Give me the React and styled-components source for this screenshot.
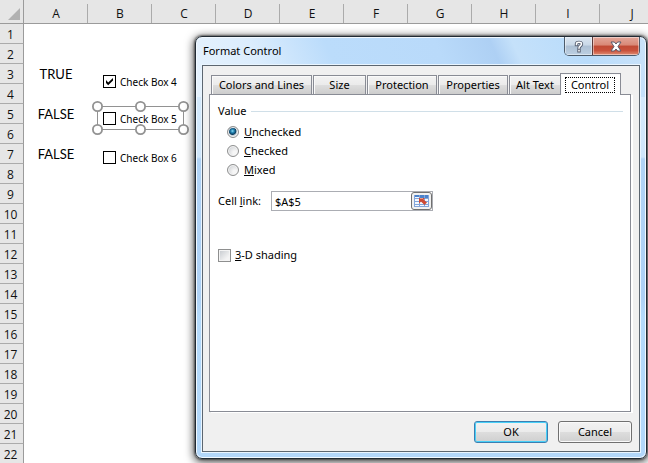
import React, { useState } from "react";
import styled, { createGlobalStyle, css } from "styled-components";

const GlobalStyle = createGlobalStyle`
  *, *::before, *::after { box-sizing: border-box; }
  body {
    margin: 0;
    overflow: hidden;
    background: #fff;
    color: #000;
    font-family: "Noto Sans", "Open Sans", sans-serif;
    font-size: 11px;
    line-height: 16px;
  }
  button, input { font: inherit; color: inherit; }
`;

const Workspace = styled.main`
  position: relative;
  min-height: 100vh;
  overflow: hidden;
`;

/* ---------- worksheet ---------- */

const Sheet = styled.table`
  width: 664px;
  table-layout: fixed;
  border-collapse: separate;
  border-spacing: 0;
`;

const IndexCol = styled.col`
  width: 24px;
`;

const headerCell = css`
  padding: 0;
  background: #e6e6e6;
  color: #111;
  font-family: "Open Sans", "Noto Sans", sans-serif;
  font-size: 12px;
  line-height: 16px;
  font-weight: 400;
`;

const ColumnHead = styled.th`
  ${headerCell}
  height: 24px;
  padding-top: 4px;
  border-bottom: 1px solid #9b9b9b;
  background: linear-gradient(#ababab, #ababab) right bottom / 1px 19px no-repeat #e6e6e6;
`;

const Corner = styled.td`
  height: 24px;
  padding: 0;
  background: #e6e6e6;
  border-bottom: 1px solid #9b9b9b;
  border-right: 1px solid #9b9b9b;

  svg { display: block; margin: 4px 0 0 8px; }
`;

const RowHead = styled.th`
  ${headerCell}
  height: 20px;
  padding: 2px 2px 0 0;
  border-right: 1px solid #9b9b9b;
  border-bottom: 1px solid #ababab;
`;

const Cell = styled.td`
  height: 20px;
  padding: 0;
  text-align: center;
  font-family: Lato, sans-serif;
  font-size: 13px;
  line-height: 18px;
`;

/* ---------- controls floating over the worksheet ---------- */

const SheetControl = styled.label`
  position: absolute;
  left: 103px;
  top: ${(p) => p.$top}px;
  display: flex;
  align-items: center;
  gap: 4px;
  height: 13px;
  font-size: 10px;
  white-space: nowrap;
`;

const TickHolder = styled.span`
  display: grid;
  width: 13px;
  height: 13px;

  > * { grid-area: 1 / 1; }
  > svg { pointer-events: none; visibility: hidden; }
  > input:checked + svg { visibility: visible; }
`;

const TickInput = styled.input`
  appearance: none;
  width: 13px;
  height: 13px;
  margin: 0;
  border: 1px solid ${(p) => (p.$soft ? "#8e8f8f" : "#000")};
  background: ${(p) =>
    p.$soft ? "linear-gradient(135deg, #c4c8cd, #f4f4f4 75%) padding-box" : "#fff"};
  ${(p) => p.$soft && "box-shadow: inset 0 0 0 1px #f4f4f4;"}
`;

const Selection = styled.svg`
  position: absolute;
  left: 91px;
  top: 100px;
  pointer-events: none;
`;

/* ---------- dialog ---------- */

const Dialog = styled.section`
  position: absolute;
  left: 195px;
  right: 1px;
  top: 36px;
  padding: 0 6px 6px;
  border: 1px solid #202a33;
  border-radius: 7px;
  background:
    linear-gradient(65deg, #e6f2fd 0, #dcedfd 70px, #bbdcfb 140px, #b9dafa 240px, #aed0f4 290px, #c5e1fa 310px, #b9dcfb 370px, #cbe3f9 100%) top / 100% 60px no-repeat,
    linear-gradient(#d9edfd 0, #cfe6fb 120px, #b0d3f6 122px, #aed1f5 260px, #b4dafb 280px, #b2d7fa 100%);
  box-shadow:
    inset 0 0 0 1px #f2f9ff,
    0 0 2px 1px rgba(0, 0, 0, 0.45),
    0 2px 9px 2px rgba(0, 0, 0, 0.6);
`;

const TitleBar = styled.header`
  display: flex;
  justify-content: space-between;
  height: 28px;
`;

const Title = styled.h1`
  margin: 0;
  padding: 6px 0 0 1px;
  font-size: 11px;
  line-height: 16px;
  font-weight: 400;
`;

const CaptionButtons = styled.div`
  display: flex;
  align-self: flex-start;
  height: 19px;
  border: 1px solid #4c5b6b;
  border-top: 0;
  border-radius: 0 0 5px 5px;
  overflow: hidden;
`;

const CaptionButton = styled.button`
  display: grid;
  place-items: center;
  width: ${(p) => (p.$close ? 47 : 27)}px;
  padding: 0;
  border: 0;
  ${(p) => p.$close && "border-left: 1px solid #5d3a3a;"}
  background: ${(p) =>
    p.$close
      ? "linear-gradient(#e3a79a 0, #d98876 45%, #c04a35 50%, #c9523c 75%, #e08d74 100%)"
      : "linear-gradient(#dbe6f1 0, #c9d8e7 45%, #adc0d4 50%, #bccfe2 100%)"};
  box-shadow: inset 0 0 0 1px rgba(255, 255, 255, 0.45);
`;

const Client = styled.form`
  display: flex;
  flex-direction: column;
  padding: 7px 6px 8px;
  border: 1px solid #5c6670;
  background: #f0f0f0;
  box-shadow: 0 0 0 1px #e9f5ff;
`;

const TabList = styled.div`
  display: flex;
  align-items: flex-end;
  height: 22px;
  padding-left: 2px;
`;

const Tab = styled.button`
  position: relative;
  flex: none;
  width: ${(p) => p.$width}px;
  height: 20px;
  padding: 0;
  border: 1px solid #898c95;
  background: linear-gradient(#f3f3f3 0, #ebebeb 50%, #dddddd 52%, #cdcdcd 100%);
  box-shadow: inset 1px 1px 0 #fafafa;
  line-height: 18px;
  white-space: nowrap;
  z-index: 0;

  & + & { margin-left: 1px; }

  &[aria-selected="true"] {
    z-index: 1;
    height: 22px;
    margin-left: -1px;
    padding: 3px 5px 2px 4px;
    border-bottom: 0;
    background: #fff;
    line-height: 14px;
  }
`;

const FocusFrame = styled.span`
  display: block;
  height: 16px;
  border: 1px dotted #000;
  line-height: 14px;
`;

const Panel = styled.div`
  display: flex;
  flex-direction: column;
  min-height: 318px;
  margin: -1px 2px 0 0;
  padding: 8px 7px 0 8px;
  border: 1px solid #898c95;
  background: #fff;
  box-shadow: 2px 1px 0 #fff;
`;

const ValueGroup = styled.fieldset`
  display: flex;
  flex-direction: column;
  gap: 3px;
  min-width: 0;
  margin: 0;
  padding: 0;
  border: 0;
`;

const Legend = styled.legend`
  display: flex;
  align-items: center;
  gap: 5px;
  width: 100%;
  margin-bottom: 5px;
  padding: 0;

  &::after {
    content: "";
    flex: 1;
    height: 1px;
    background: #d0dfe8;
  }
`;

const Choice = styled.label`
  display: flex;
  align-items: center;
  gap: ${(p) => (p.$indent ? 5 : 4)}px;
  height: 16px;
  padding-left: ${(p) => (p.$indent ? 9 : 0)}px;
`;

const Radio = styled.input`
  appearance: none;
  width: 12px;
  height: 12px;
  margin: 0;
  border: 1px solid #8e8f8f;
  border-radius: 50%;
  background: radial-gradient(circle at 70% 70%, #f6f6f6 20%, #c9ccd0 90%);
  box-shadow: inset 0 0 0 1px #f4f4f4;

  &:checked {
    background: radial-gradient(circle at 45% 40%, #8fdcf5 0, #2587b5 20%, #0d3d5f 43%, #b9c6cf 52%, #e4e8eb 70%);
  }
`;

const LinkRow = styled.div`
  display: flex;
  align-items: center;
  gap: 10px;
  margin-top: 13px;
`;

const LinkLabel = styled.label`
  width: 43px;
  white-space: nowrap;
`;

const RefBox = styled.div`
  display: flex;
  width: 162px;
  height: 20px;
  border: 1px solid #abadb3;
`;

const RefInput = styled.input`
  flex: 1;
  min-width: 0;
  padding: 2px 0 0 3px;
  border: 0;
  outline: 0;
  background: transparent;
`;

const RefButton = styled.button`
  display: grid;
  place-items: center;
  width: 21px;
  padding: 0;
  border: 1px solid #707070;
  border-radius: 3px;
  background: #f1f1f1;
`;

const ShadingRow = styled.div`
  margin-top: 36px;
`;

const Actions = styled.footer`
  display: flex;
  justify-content: flex-end;
  gap: 10px;
  margin-top: 9px;
  padding-right: 1px;
`;

const ActionButton = styled.button`
  width: 74px;
  height: 22px;
  padding: 0;
  border: 1px solid ${(p) => (p.$primary ? "#3c7fb1" : "#707070")};
  border-radius: 3px;
  background: linear-gradient(#f2f2f2 0, #ebebeb 50%, #dddddd 52%, #cfcfcf 100%);
  box-shadow: inset 0 0 0 1px ${(p) => (p.$primary ? "#48d0f8" : "#fafafa")};
`;

const columns = ["A", "B", "C", "D", "E", "F", "G", "H", "I", "J"];
const rows = Array.from({ length: 22 }, (_, i) => i + 1);
const values = { 3: "TRUE", 5: "FALSE", 7: "FALSE" };
const sheetBoxes = [
  { label: "Check Box 4", top: 75, checked: true },
  { label: "Check Box 5", top: 112, checked: false },
  { label: "Check Box 6", top: 151, checked: false },
];
const tabs = [
  { label: "Colors and Lines", width: 101 },
  { label: "Size", width: 53 },
  { label: "Protection", width: 70 },
  { label: "Properties", width: 70 },
  { label: "Alt Text", width: 52 },
  { label: "Control", width: 61 },
];
const choices = ["Unchecked", "Checked", "Mixed"];

function Tick() {
  return (
    <svg width="13" height="13" viewBox="0 0 13 13" aria-hidden="true">
      <path d="M3 5v3l2.2 2.2L10 5.6V3L5.2 7.4Z" fill="#000" />
    </svg>
  );
}

function TickBox({ soft, checked }) {
  return (
    <TickHolder>
      <TickInput type="checkbox" $soft={soft} defaultChecked={checked} />
      <Tick />
    </TickHolder>
  );
}

function HelpIcon() {
  const mark = "M2.500 4.500V4C2.500 1.800 7.500 1.800 7.500 4 7.500 5.900 5 5.800 5 8M5 10.500v.2";
  return (
    <svg width="10" height="13" viewBox="0 0 10 13" aria-hidden="true">
      <g fill="none" strokeLinecap="square">
        <path d={mark} stroke="#5a6273" strokeWidth="3.400" />
        <path d={mark} stroke="#fff" strokeWidth="1.500" />
      </g>
    </svg>
  );
}

function CloseIcon() {
  return (
    <svg width="12" height="11" viewBox="0 0 12 11" aria-hidden="true">
      <path d="M1 1h3.300L6 3l1.700-2H11L8 5.500l3 4.500H7.700L6 8l-1.700 2H1l3-4.500Z" fill="#fff" stroke="#5a5a6b" />
    </svg>
  );
}

function RangeIcon() {
  return (
    <svg width="17" height="14" viewBox="0 0 17 14" aria-hidden="true">
      <path d="M1 1h15v12H1Z" fill="#f3f8fe" />
      <path d="M1 1h5v2H1ZM7 1h9v3H7Z" fill="#4a82cc" />
      <path d="M1 4.500h15M1 7.500h15M1 10.500h15M1 12.500h15M1.500 1v12M6.500 1v12M11.500 1v12M15.500 1v12" stroke="#82a5da" />
      <path d="M6 4h6l-1.500 1.500L14 8.500 11.500 11 8 7.500 6 9.500Z" fill="#cf4a33" />
      <path d="M7 4.500h3" stroke="#ec9a84" />
    </svg>
  );
}

function SelectionFrame() {
  const points = [[6.5, 6.5], [49.5, 6.5], [92.5, 6.5], [6.5, 29.5], [49.5, 29.5], [92.5, 29.5]];
  return (
    <Selection width="100" height="36" viewBox="0 0 100 36" aria-hidden="true">
      <rect x="6.5" y="6.5" width="86" height="23" fill="none" stroke="#929292" />
      {points.map(([x, y]) => (
        <circle key={`${x}-${y}`} cx={x} cy={y} r="4.6" fill="#fff" stroke="#929292" strokeWidth="1.8" />
      ))}
    </Selection>
  );
}

export default function App() {
  const [activeTab, setActiveTab] = useState("Control");
  const [cellLink, setCellLink] = useState("$A$5");

  return (
    <Workspace>
      <GlobalStyle />
      <Sheet>
        <colgroup>
          <IndexCol />
          {columns.map((c) => <col key={c} />)}
        </colgroup>
        <thead>
          <tr>
            <Corner>
              <svg width="12" height="12" viewBox="0 0 12 12" aria-hidden="true">
                <path d="M12 0v12H0Z" fill="#b1b1b1" />
              </svg>
            </Corner>
            {columns.map((c) => <ColumnHead key={c} scope="col">{c}</ColumnHead>)}
          </tr>
        </thead>
        <tbody>
          {rows.map((r) => (
            <tr key={r}>
              <RowHead scope="row">{r}</RowHead>
              {columns.map((c) => <Cell key={c}>{c === "A" ? values[r] : null}</Cell>)}
            </tr>
          ))}
        </tbody>
      </Sheet>

      {sheetBoxes.map((box) => (
        <SheetControl key={box.label} $top={box.top}>
          <TickBox checked={box.checked} />
          {box.label}
        </SheetControl>
      ))}
      <SelectionFrame />

      <Dialog role="dialog" aria-labelledby="dialog-title">
        <TitleBar>
          <Title id="dialog-title">Format Control</Title>
          <CaptionButtons>
            <CaptionButton type="button" aria-label="Help"><HelpIcon /></CaptionButton>
            <CaptionButton type="button" aria-label="Close" $close><CloseIcon /></CaptionButton>
          </CaptionButtons>
        </TitleBar>
        <Client onSubmit={(e) => e.preventDefault()}>
          <TabList role="tablist">
            {tabs.map((tab) => (
              <Tab
                key={tab.label}
                type="button"
                role="tab"
                $width={tab.width}
                aria-selected={tab.label === activeTab}
                onClick={() => setActiveTab(tab.label)}
              >
                {tab.label === activeTab ? <FocusFrame>{tab.label}</FocusFrame> : tab.label}
              </Tab>
            ))}
          </TabList>
          <Panel role="tabpanel">
            <ValueGroup>
              <Legend>Value</Legend>
              {choices.map((choice, i) => (
                <Choice key={choice} $indent>
                  <Radio type="radio" name="value" defaultChecked={i === 0} />
                  <span><u>{choice[0]}</u>{choice.slice(1)}</span>
                </Choice>
              ))}
            </ValueGroup>
            <LinkRow>
              <LinkLabel htmlFor="cell-link">Cell <u>l</u>ink:</LinkLabel>
              <RefBox>
                <RefInput id="cell-link" value={cellLink} onChange={(e) => setCellLink(e.target.value)} />
                <RefButton type="button" aria-label="Select cell"><RangeIcon /></RefButton>
              </RefBox>
            </LinkRow>
            <ShadingRow>
              <Choice>
                <TickBox soft />
                <span><u>3</u>-D shading</span>
              </Choice>
            </ShadingRow>
          </Panel>
          <Actions>
            <ActionButton type="submit" $primary>OK</ActionButton>
            <ActionButton type="button">Cancel</ActionButton>
          </Actions>
        </Client>
      </Dialog>
    </Workspace>
  );
}
